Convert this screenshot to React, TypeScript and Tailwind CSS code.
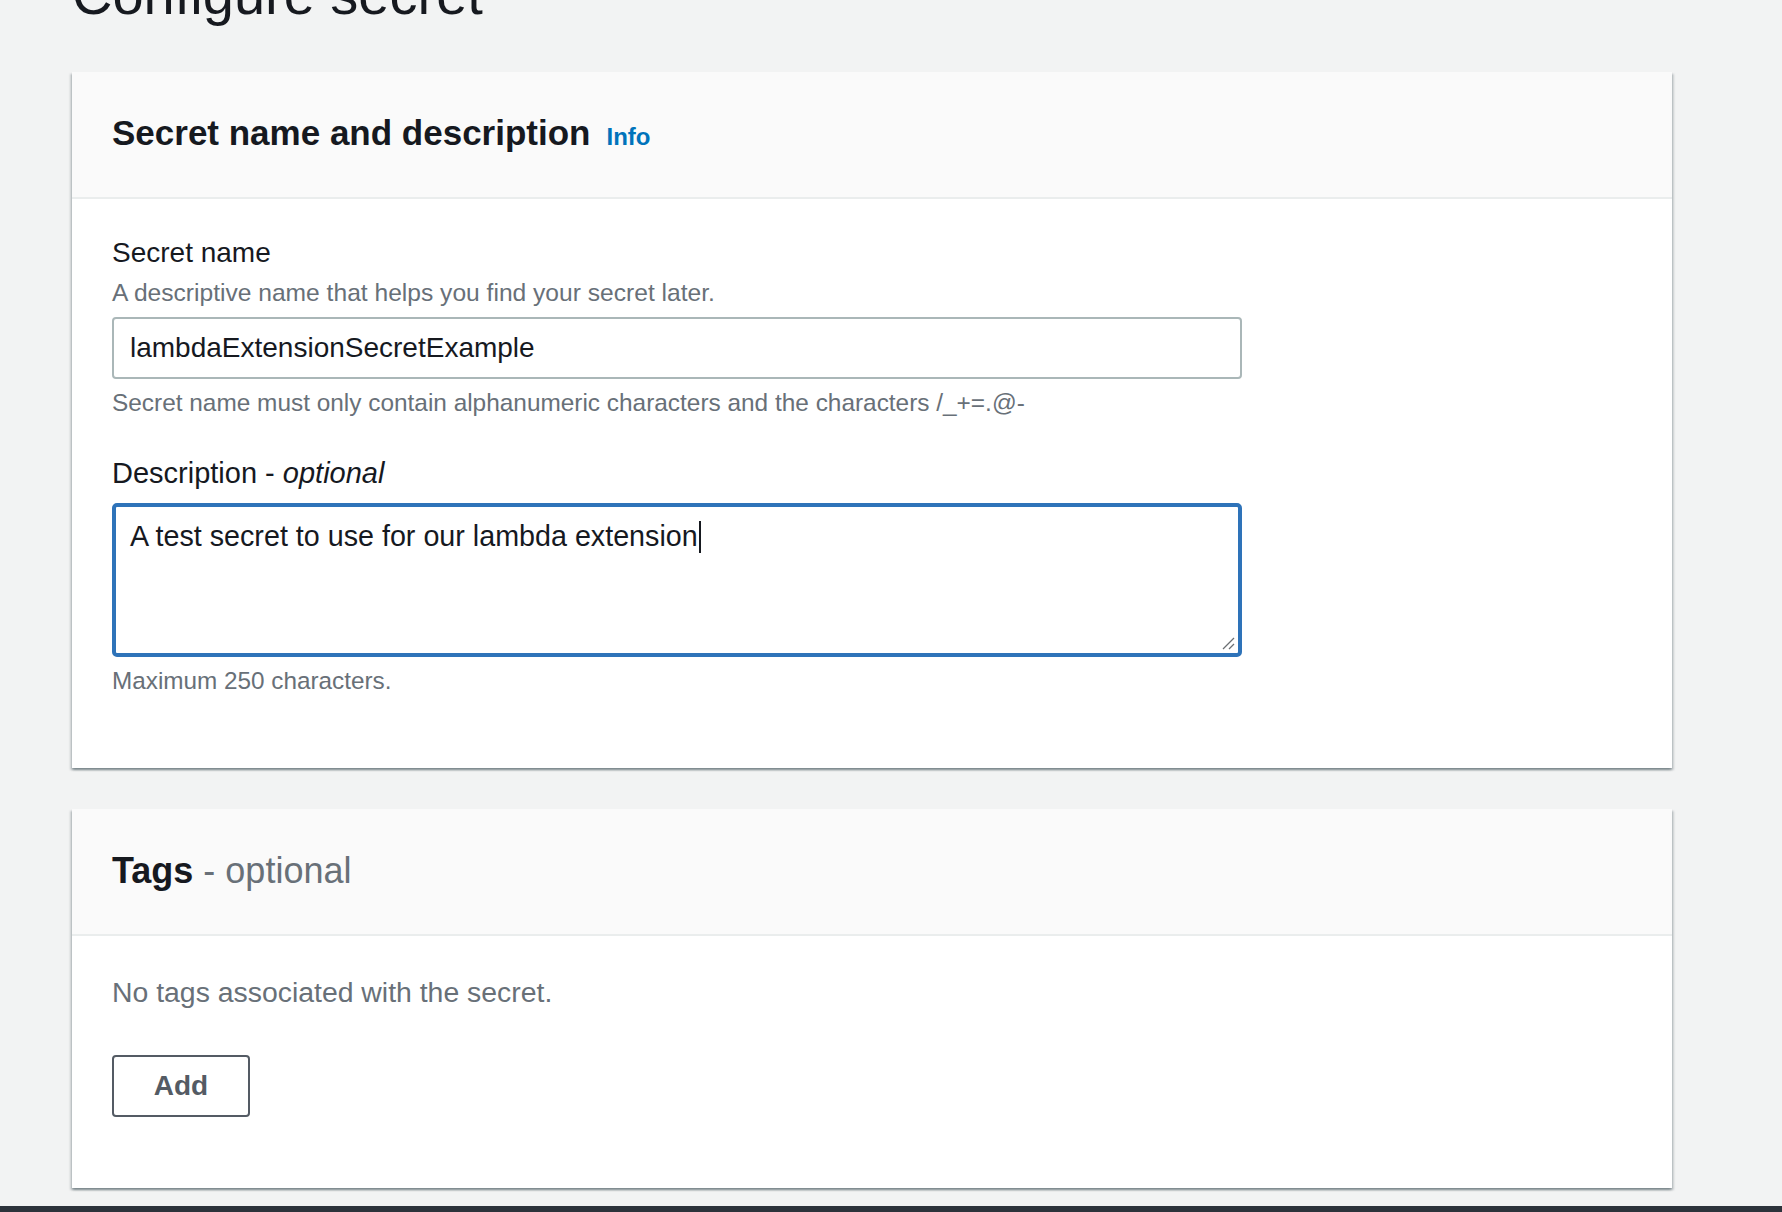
import React from 'react';

const cardShadow =
  'shadow-[0_2px_2px_0_rgba(0,28,36,0.3),2px_2px_2px_0_rgba(0,28,36,0.15),-2px_2px_2px_0_rgba(0,28,36,0.15)]';

function ResizeGrip() {
  return (
    <svg
      className="absolute right-[3px] bottom-[3px]"
      width="14"
      height="14"
      viewBox="0 0 14 14"
      fill="none"
    >
      <line x1="13" y1="2" x2="2" y2="13" stroke="#6b6f73" strokeWidth="1.2" />
      <line x1="13" y1="8" x2="8" y2="13" stroke="#6b6f73" strokeWidth="1.2" />
    </svg>
  );
}

export default function App() {
  return (
    <div className="h-screen overflow-hidden bg-[#f2f3f3] font-['Liberation_Sans',Arial,sans-serif] text-[#16191f]">
      <div className="pl-[72px]">
        <h1 className="-mt-[33px] text-[56px] leading-[56px] font-normal">Configure secret</h1>

        {/* secret name + description */}
        <section className={`mt-[49px] w-[1600px] bg-white ${cardShadow}`}>
          <header className="flex items-baseline border-b-2 border-[#eaeded] bg-[#fafafa] px-10 pt-[39px] pb-[42px]">
            <h2 className="text-[35px] leading-[44px] font-bold">Secret name and description</h2>
            <a href="#" className="ml-[16px] text-[24px] font-bold text-[#0073bb]">
              Info
            </a>
          </header>

          <div className="px-10 pt-8 pb-[71px]">
            <label className="block text-[28px] leading-[44px]">Secret name</label>
            <p className="mt-[2px] text-[24.6px] leading-[32px] text-[#687078]">
              A descriptive name that helps you find your secret later.
            </p>
            <div className="mt-2 flex h-[62px] w-[1130px] items-center rounded-[4px] border-2 border-[#aab7b8] pl-4 text-[28px]">
              lambdaExtensionSecretExample
            </div>
            <p className="mt-2 text-[24.4px] leading-[32px] text-[#687078]">
              Secret name must only contain alphanumeric characters and the characters /_+=.@-
            </p>

            <label className="mt-8 block text-[29px] leading-[44px]">
              Description - <i>optional</i>
            </label>
            <div className="relative mt-2 h-[154px] w-[1130px] rounded-[5px] border-4 border-[#2e73b9] pt-[7px] pl-[14px] text-[28.7px] leading-[44px]">
              A test secret to use for our lambda extension
              <span className="ml-[1px] inline-block h-[32px] w-[2px] bg-[#16191f] align-[-7px]" />
              <ResizeGrip />
            </div>
            <p className="mt-2 text-[24.3px] leading-[32px] text-[#687078]">Maximum 250 characters.</p>
          </div>
        </section>

        {/* tags */}
        <section className={`mt-[41px] w-[1600px] bg-white ${cardShadow}`}>
          <header className="flex items-baseline border-b-2 border-[#eaeded] bg-[#fafafa] px-10 pt-[40px] pb-[41px]">
            <h2 className="text-[36px] leading-[44px]">
              <span className="font-bold">Tags</span>
              <span className="text-[#687078]"> - optional</span>
            </h2>
          </header>
          <div className="px-10 pt-[34px] pb-[71px]">
            <p className="text-[28.4px] leading-[44px] text-[#687078]">No tags associated with the secret.</p>
            <button
              type="button"
              className="mt-[41px] flex h-[62px] w-[138px] items-center justify-center rounded-[4px] border-2 border-[#545b64] bg-white text-[28px] font-bold text-[#545b64]"
            >
              Add
            </button>
          </div>
        </section>
      </div>
      <div className="mt-[18px] h-[40px] bg-[#2c333b]" />
    </div>
  );
}
